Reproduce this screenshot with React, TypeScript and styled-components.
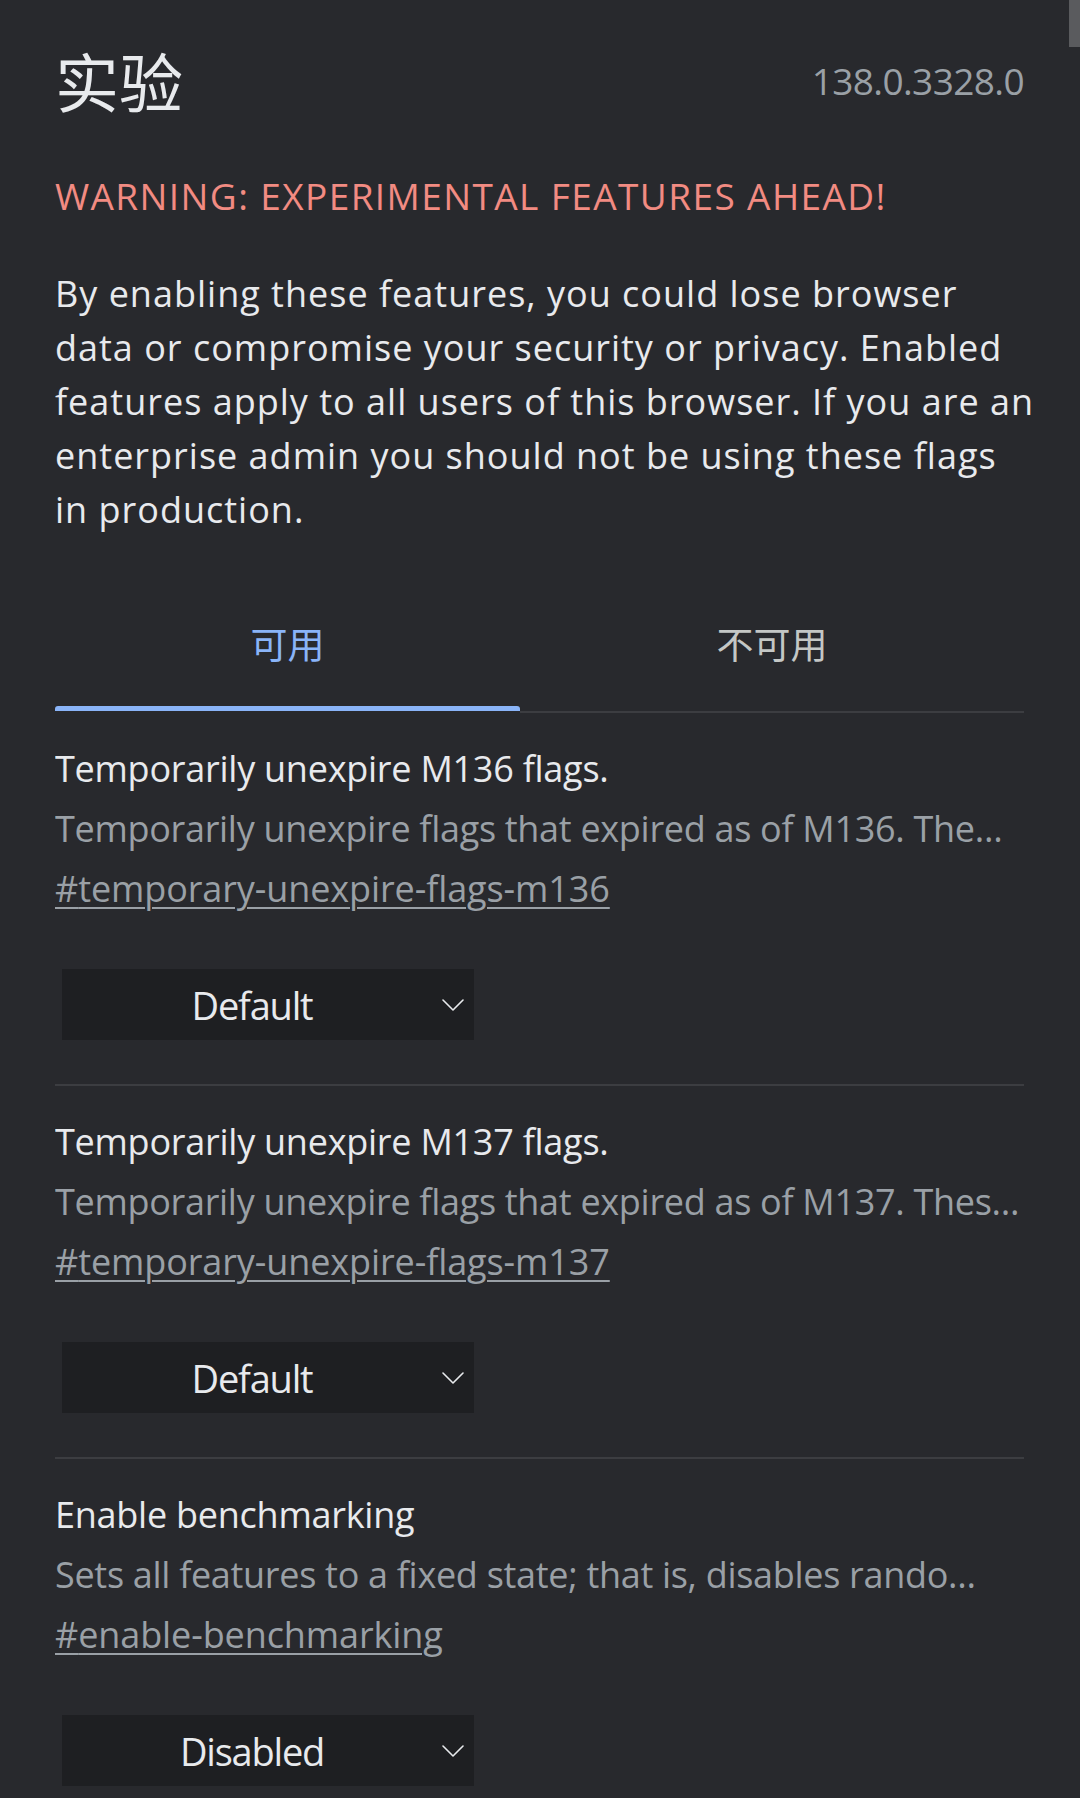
import React from 'react';
import styled, { createGlobalStyle } from 'styled-components';

const GlobalStyle = createGlobalStyle`
  html, body {
    margin: 0;
    padding: 0;
    background: #28292d;
  }
  body {
    overflow: hidden;
    font-family: "Open Sans", "Noto Sans", "Noto Sans CJK SC", sans-serif;
    -webkit-font-smoothing: antialiased;
  }
  * { box-sizing: border-box; }
`;

const Page = styled.main`
  padding: 39px 56px 0 55px;
  min-height: 1798px;
  color: #e8eaed;
`;

const Header = styled.header`
  display: flex;
  justify-content: space-between;
  align-items: center;
  height: 80px;
`;

const Title = styled.h1`
  margin: 0;
  font-family: "Noto Sans CJK SC", sans-serif;
  font-weight: 400;
  font-size: 64px;
  line-height: 80px;
  color: #e8eaed;
`;

const Version = styled.span`
  font-size: 37px;
  line-height: 80px;
  padding-top: 4px;
  letter-spacing: -0.6px;
  color: #9aa0a6;
`;

const Warning = styled.p`
  margin: 50px 0 0;
  font-size: 37px;
  line-height: 54px;
  letter-spacing: 1.4px;
  color: #f28b82;
  white-space: nowrap;
`;

const Intro = styled.p`
  margin: 44px 0 0;
  font-size: 36px;
  line-height: 54px;
  letter-spacing: 1px;
  color: #e8eaed;
  white-space: nowrap;
`;

const TabBar = styled.div`
  margin-top: 38px;
  display: grid;
  grid-template-columns: 465px 1fr;
`;

const Tab = styled.button<{ $active?: boolean }>`
  position: relative;
  height: 138px;
  padding: 0;
  margin: 0;
  background: none;
  border: 0;
  border-bottom: 2px solid ${p => (p.$active ? 'transparent' : '#3c3d41')};
  display: flex;
  align-items: center;
  justify-content: center;
  font-family: "Noto Sans CJK SC", sans-serif;
  font-size: 37px;
  color: ${p => (p.$active ? '#8ab4f8' : '#c4c7c5')};
`;

const Indicator = styled.span`
  position: absolute;
  left: 0;
  right: 0;
  bottom: 0;
  height: 5px;
  background: #8ab4f8;
  border-radius: 3px 3px 0 0;
`;

const Flag = styled.section`
  padding: 26px 0 44px;
  border-bottom: 2px solid #3c3d41;
`;

const FlagName = styled.h2`
  margin: 0;
  font-size: 36px;
  font-weight: 500;
  line-height: 60px;
  letter-spacing: -0.25px;
  color: #e8eaed;
  white-space: nowrap;
  overflow: hidden;
  text-overflow: ellipsis;
`;

const FlagDesc = styled.p`
  margin: 0;
  font-size: 36px;
  line-height: 60px;
  letter-spacing: -0.3px;
  color: #9aa0a6;
  white-space: nowrap;
  overflow: hidden;
`;

const FlagLink = styled.a`
  display: block;
  width: max-content;
  font-size: 36px;
  line-height: 60px;
  letter-spacing: -0.1px;
  color: #9aa0a6;
  text-decoration: underline;
  text-decoration-thickness: 2px;
  text-underline-offset: 5px;
`;

const Dropdown = styled.div`
  margin: 50px 0 0 7px;
  width: 412px;
  height: 71px;
  background: #1e1f22;
  display: flex;
  align-items: center;
  padding-right: 10px;
`;

const DropdownLabel = styled.span`
  flex: 1;
  text-align: center;
  font-size: 38px;
  line-height: 48px;
  letter-spacing: -1.2px;
  color: #e8eaed;
`;

const ScrollThumb = styled.div`
  position: fixed;
  top: 0;
  right: 0;
  width: 11px;
  height: 47px;
  background: #5a5b5e;
`;

const Chevron = () => (
  <svg width="22" height="12" viewBox="0 0 22 12" fill="none">
    <path d="M1 1 L11 11 L21 1" stroke="#e8eaed" strokeWidth="1.6" strokeLinecap="round" strokeLinejoin="round" />
  </svg>
);

type FlagItem = { name: string; desc: string; id: string; value: string };

const flags: FlagItem[] = [
  {
    name: 'Temporarily unexpire M136 flags.',
    desc: 'Temporarily unexpire flags that expired as of M136. The…',
    id: 'temporary-unexpire-flags-m136',
    value: 'Default',
  },
  {
    name: 'Temporarily unexpire M137 flags.',
    desc: 'Temporarily unexpire flags that expired as of M137. Thes…',
    id: 'temporary-unexpire-flags-m137',
    value: 'Default',
  },
  {
    name: 'Enable benchmarking',
    desc: 'Sets all features to a fixed state; that is, disables rando…',
    id: 'enable-benchmarking',
    value: 'Disabled',
  },
];

export default function App() {
  return (
    <>
      <GlobalStyle />
      <Page>
        <Header>
          <Title>实验</Title>
          <Version>138.0.3328.0</Version>
        </Header>
        <Warning>WARNING: EXPERIMENTAL FEATURES AHEAD!</Warning>
        <Intro>
          By enabling these features, you could lose browser
          <br />
          data or compromise your security or privacy. Enabled
          <br />
          features apply to all users of this browser. If you are an
          <br />
          enterprise admin you should not be using these flags
          <br />
          in production.
        </Intro>
        <TabBar>
          <Tab $active>
            可用
            <Indicator />
          </Tab>
          <Tab>不可用</Tab>
        </TabBar>
        {flags.map(f => (
          <Flag key={f.id}>
            <FlagName>{f.name}</FlagName>
            <FlagDesc>{f.desc}</FlagDesc>
            <FlagLink href={`#${f.id}`}>#{f.id}</FlagLink>
            <Dropdown>
              <DropdownLabel>{f.value}</DropdownLabel>
              <Chevron />
            </Dropdown>
          </Flag>
        ))}
      </Page>
      <ScrollThumb />
    </>
  );
}
